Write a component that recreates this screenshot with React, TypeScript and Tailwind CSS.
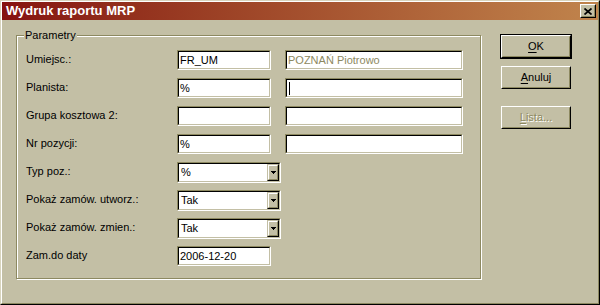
import React from 'react';

const Field = ({ w, children, muted }: any) => (
  <div className={`${w} h-[20px] border border-t-[#8d8961] border-l-[#8d8961] border-r-white border-b-white`}>
    <div
      className={`h-full border border-t-black border-l-black border-r-[#c3bfa5] border-b-[#c3bfa5] bg-white flex items-center pl-[1px] leading-[16px] ${
        muted ? 'text-[#8d8961]' : 'text-black'
      }`}
    >
      {children}
    </div>
  </div>
);

const Combo = ({ value }: any) => (
  <div className="w-[104px] h-[21px] border border-t-[#8d8961] border-l-[#8d8961] border-r-white border-b-white">
    <div className="h-full flex border border-t-black border-l-black border-r-[#c3bfa5] border-b-[#c3bfa5] bg-white">
      <div className="flex-1 flex items-center pl-[2px] leading-[17px]">{value}</div>
      <div className="w-[12px] h-full bg-[#c3bfa5] border border-t-[#c3bfa5] border-l-[#c3bfa5] border-r-black border-b-black">
        <div className="h-full border border-t-white border-l-white border-r-[#8d8961] border-b-[#8d8961] flex items-center justify-center">
          <svg width="5" height="3" viewBox="0 0 5 3" shapeRendering="crispEdges">
            <rect x="0" y="0" width="5" height="1" fill="#000" />
            <rect x="1" y="1" width="3" height="1" fill="#000" />
            <rect x="2" y="2" width="1" height="1" fill="#000" />
          </svg>
        </div>
      </div>
    </div>
  </div>
);

const Btn = ({ children, primary, disabled }: any) => {
  const bevel = (
    <div className="w-[70px] h-[23px] border border-t-white border-l-white border-r-black border-b-black">
      <div
        className={`h-full border border-t-[#c3bfa5] border-l-[#c3bfa5] border-r-[#8d8961] border-b-[#8d8961] flex items-center justify-center leading-[13px] ${
          disabled ? 'text-[#8d8961] [text-shadow:1px_1px_0_#fff]' : 'text-black'
        }`}
      >
        {children}
      </div>
    </div>
  );
  if (primary) return <div className="w-[72px] h-[25px] border border-black">{bevel}</div>;
  return <div className="ml-[1px]">{bevel}</div>;
};

const Row = ({ label, children }: any) => (
  <div className="h-[20px] flex items-start">
    <div className="w-[151px] leading-[19px] text-black">{label}</div>
    {children}
  </div>
);

export default function App() {
  return (
    <div className="w-[600px] h-[305px] bg-[#c3bfa5] border border-t-[#d8d4bd] border-l-[#d8d4bd] border-r-black border-b-black font-['Liberation_Sans',Arial,sans-serif] text-[11px]">
      <div className="h-full flex flex-col border border-t-white border-l-white border-r-[#8d8961] border-b-[#8d8961]">
        {/* title bar */}
        <div className="h-[18px] shrink-0 flex items-center pl-[4px] pr-[2px] bg-linear-to-r from-[#851010] to-[#c0844c]">
          <span className="text-white font-bold text-[13px] leading-[16px]">Wydruk raportu MRP</span>
          <div className="ml-auto w-[16px] h-[14px] bg-[#c3bfa5] border border-t-white border-l-white border-r-black border-b-black">
            <div className="h-full border border-t-[#c3bfa5] border-l-[#c3bfa5] border-r-[#8d8961] border-b-[#8d8961] flex items-center justify-center">
              <svg width="8" height="7" viewBox="0 0 8 7">
                <path d="M0.5 0.5 L7.5 6.5 M7.5 0.5 L0.5 6.5" stroke="#000" strokeWidth="1.7" />
              </svg>
            </div>
          </div>
        </div>

        <div className="flex items-start pl-[14px]">
          {/* group box */}
          <div className="relative mt-[15px] w-[465px] h-[244px] border border-[#8d8961] shadow-[inset_1px_1px_0_#fff,1px_1px_0_#fff] pt-[14px] pl-[9px] flex flex-col gap-[8px]">
            <span className="absolute left-[7px] top-[-7px] px-[1px] bg-[#c3bfa5] leading-[13px] text-black">Parametry</span>

            <Row label="Umiejsc.:">
              <Field w="w-[94px]">FR_UM</Field>
              <div className="ml-[14px]">
                <Field w="w-[178px]" muted>
                  POZNAŃ Piotrowo
                </Field>
              </div>
            </Row>
            <Row label="Planista:">
              <Field w="w-[94px]">%</Field>
              <div className="ml-[14px]">
                <Field w="w-[178px]">
                  <span className="ml-[1px] w-[1px] h-[13px] bg-black" />
                </Field>
              </div>
            </Row>
            <Row label="Grupa kosztowa 2:">
              <Field w="w-[94px]" />
              <div className="ml-[14px]">
                <Field w="w-[178px]" />
              </div>
            </Row>
            <Row label="Nr pozycji:">
              <Field w="w-[94px]">%</Field>
              <div className="ml-[14px]">
                <Field w="w-[178px]" />
              </div>
            </Row>
            <Row label="Typ poz.:">
              <Combo value="%" />
            </Row>
            <Row label="Pokaż zamów. utworz.:">
              <Combo value="Tak" />
            </Row>
            <Row label="Pokaż zamów. zmien.:">
              <Combo value="Tak" />
            </Row>
            <Row label="Zam.do daty">
              <Field w="w-[94px]">2006-12-20</Field>
            </Row>
          </div>

          {/* buttons */}
          <div className="ml-[19px] mt-[14px] flex flex-col">
            <Btn primary>
              <span>
                <span className="underline underline-offset-[2px]">O</span>K
              </span>
            </Btn>
            <div className="mt-[7px]">
              <Btn>
                <span>
                  <span className="underline underline-offset-[2px]">A</span>nuluj
                </span>
              </Btn>
            </div>
            <div className="mt-[17px]">
              <Btn disabled>
                <span>
                  <span className="underline underline-offset-[2px]">L</span>ista...
                </span>
              </Btn>
            </div>
          </div>
        </div>
      </div>
    </div>
  );
}
